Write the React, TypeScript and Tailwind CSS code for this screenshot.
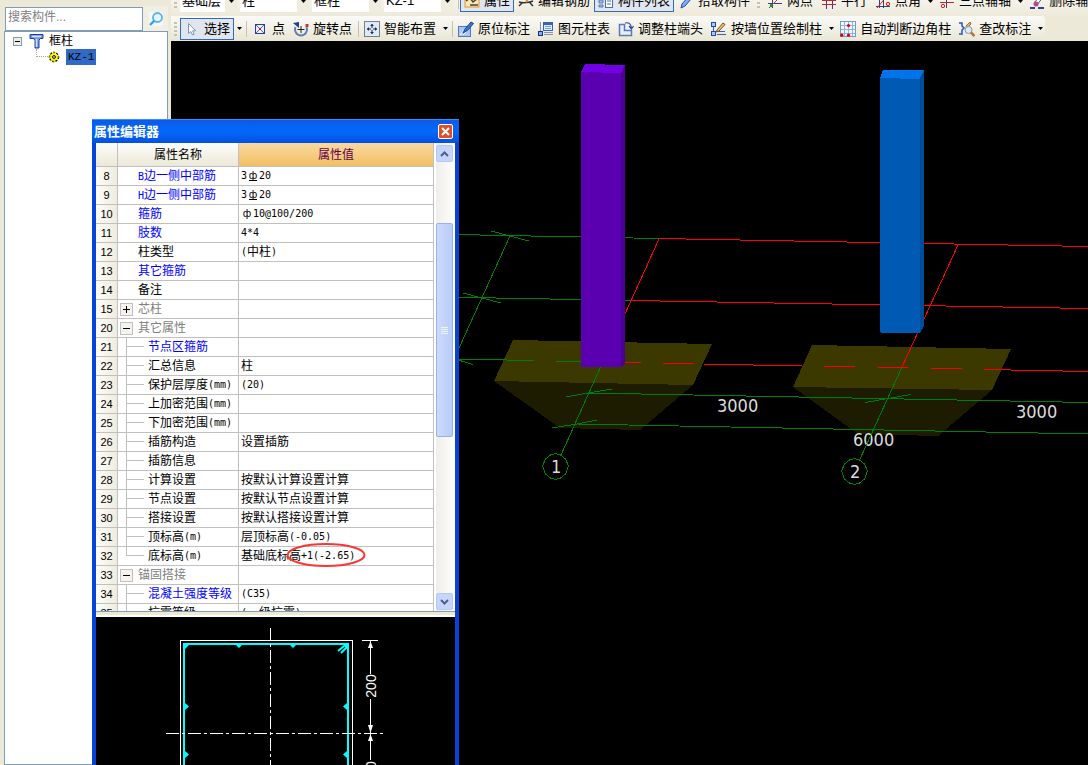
import { useState } from "react";
import type { ReactNode } from "react";

type Kind = "link" | "text" | "group" | "child" | "childLink";

type PropertyRow = {
  no: number;
  name: string;
  value?: string;
  kind: Kind;
  open?: boolean;
  last?: boolean;
  marked?: boolean;
};

const rows: PropertyRow[] = [
  { no: 8, name: "B边一侧中部筋", value: "3Φ20", kind: "link" },
  { no: 9, name: "H边一侧中部筋", value: "3Φ20", kind: "link" },
  { no: 10, name: "箍筋", value: "ф10@100/200", kind: "link" },
  { no: 11, name: "肢数", value: "4*4", kind: "link" },
  { no: 12, name: "柱类型", value: "(中柱)", kind: "text" },
  { no: 13, name: "其它箍筋", kind: "link" },
  { no: 14, name: "备注", kind: "text" },
  { no: 15, name: "芯柱", kind: "group", open: false },
  { no: 20, name: "其它属性", kind: "group", open: true },
  { no: 21, name: "节点区箍筋", kind: "childLink" },
  { no: 22, name: "汇总信息", value: "柱", kind: "child" },
  { no: 23, name: "保护层厚度(mm)", value: "(20)", kind: "child" },
  { no: 24, name: "上加密范围(mm)", kind: "child" },
  { no: 25, name: "下加密范围(mm)", kind: "child" },
  { no: 26, name: "插筋构造", value: "设置插筋", kind: "child" },
  { no: 27, name: "插筋信息", kind: "child" },
  { no: 28, name: "计算设置", value: "按默认计算设置计算", kind: "child" },
  { no: 29, name: "节点设置", value: "按默认节点设置计算", kind: "child" },
  { no: 30, name: "搭接设置", value: "按默认搭接设置计算", kind: "child" },
  { no: 31, name: "顶标高(m)", value: "层顶标高(-0.05)", kind: "child" },
  { no: 32, name: "底标高(m)", value: "基础底标高+1(-2.65)", kind: "child", last: true, marked: true },
  { no: 33, name: "锚固搭接", kind: "group", open: true },
  { no: 34, name: "混凝土强度等级", value: "(C35)", kind: "childLink" },
  { no: 35, name: "抗震等级", value: "(一级抗震)", kind: "child" },
];

// Latin runs are set in a half-width mono face, rebar marks in a full-width slot
function Mixed({ text }: { text: string }) {
  const parts = text.match(/[\x20-\x7e]+|[Φф]|[^\x20-\x7eΦф]+/g) ?? [];
  return (
    <span className="inline-flex items-center whitespace-pre">
      {parts.map((part, i) => {
        if (part === "Φ" || part === "ф") {
          return (
            <span key={i} className="flex w-3 justify-center font-['DejaVu_Sans'] text-[10px]">
              <span className={part === "Φ" ? "border-b border-black leading-[9px]" : "leading-[9px]"}>ф</span>
            </span>
          );
        }
        if (/^[\x20-\x7e]+$/.test(part)) {
          return (
            <span key={i} className="font-['DejaVu_Sans_Mono',monospace] text-[10px]">
              {part}
            </span>
          );
        }
        return <span key={i}>{part}</span>;
      })}
    </span>
  );
}

function Icon({ children }: { children: ReactNode }) {
  return (
    <svg viewBox="0 0 16 16" className="size-4 shrink-0" fill="none" aria-hidden="true">
      {children}
    </svg>
  );
}

const icons = {
  pointer: (
    <Icon>
      <path d="M4.500 2.500v10l2.300-2 1.700 3.500 1.700-.8-1.600-3.400h3z" fill="#fff" stroke="#7b93b8" />
    </Icon>
  ),
  point: (
    <Icon>
      <rect x="3.500" y="3.500" width="9" height="9" fill="#e8f0ff" stroke="#2b3f96" />
      <path d="M4 4l8 8M12 4l-8 8" stroke="#5069c0" />
      <rect x="7" y="7" width="2" height="2" fill="#e01010" />
    </Icon>
  ),
  rotate: (
    <Icon>
      <path d="M2.500 6a6 6 0 1 0 11 0" stroke="#5d7fb5" strokeWidth="2" />
      <path d="M0 2l6-1v6z" fill="#1d3f8f" />
      <path d="M8 5v7M4.500 8.500h7" stroke="#222" />
      <rect x="12.500" y="3" width="3" height="3" fill="#c33" />
    </Icon>
  ),
  smart: (
    <Icon>
      <rect x="0.500" y="0.500" width="15" height="15" fill="#dceafc" stroke="#111" strokeDasharray="1 1" />
      <path d="M8 3v4M8 9v4M3 8h4M9 8h4" stroke="#222" />
      <path d="M6 5l2-2 2 2zM6 11l2 2 2-2zM5 6L3 8l2 2zM11 6l2 2-2 2z" fill="#1d2f66" />
    </Icon>
  ),
  origin: (
    <Icon>
      <rect x="0.500" y="5.500" width="12" height="10" fill="#a9c9f2" stroke="#4b79c4" />
      <path d="M2 14l5-6M5 14l6-6" stroke="#fff" />
      <path d="M5 12l2-4 6-7 2.500 1.500-6 7z" fill="#3c78d8" stroke="#1c3f87" />
    </Icon>
  ),
  tableCol: (
    <Icon>
      <path d="M2.500 1v10M6 13.500h9M6 11.500h9" stroke="#8a93a5" />
      <rect x="5.500" y="1.500" width="9" height="8" fill="#dbe9ff" stroke="#3b62b5" />
      <path d="M5 3h10" stroke="#3b62b5" strokeWidth="2" />
      <path d="M7 5.500h6M7 7.500h6" stroke="#7f9fd8" />
      <rect x="0.500" y="10.500" width="4" height="4" fill="#7fb0f5" stroke="#10309a" />
    </Icon>
  ),
  adjust: (
    <Icon>
      <path d="M1.500 3.500h5v6h7v5h-12z" fill="#e6efff" stroke="#5879bd" strokeWidth="1.500" />
      <path d="M7 2c4-1 6 1 6.500 5M11 5l2.500 3L15.500 5" stroke="#274a9b" strokeWidth="1.200" />
    </Icon>
  ),
  wall: (
    <Icon>
      <path d="M2.500 2v12M6 13.500h9M6 10.500h8" stroke="#345fb8" />
      <rect x="0.500" y="1.500" width="4" height="4" fill="#a7c9ff" stroke="#2049a4" />
      <rect x="0.500" y="10.500" width="4" height="4" fill="#a7c9ff" stroke="#2049a4" />
      <path d="M6 9l6-7 2 1.500-6 6.500-2.500 1z" fill="#f2c45f" stroke="#6d5230" />
    </Icon>
  ),
  grid: (
    <Icon>
      <rect x="0.500" y="0.500" width="15" height="15" fill="#f4f9ff" stroke="#6f9bd8" />
      <path d="M4.500 1v14M8.500 1v14M12.500 1v14M1 4.500h14M1 8.500h14M1 12.500h14" stroke="#8db3e6" />
      <circle cx="8.500" cy="4.500" r="1.600" fill="#d00" />
      <circle cx="1.800" cy="14.200" r="1.600" fill="#d00" />
      <circle cx="8.500" cy="14.200" r="1.600" fill="#d00" />
    </Icon>
  ),
  check: (
    <Icon>
      <path d="M0 2h3v3l2 2-2 2v4H0" stroke="#2454c4" strokeWidth="1.500" />
      <path d="M7 5l4-4 1 2-4 4z" fill="#e8b050" stroke="#9a6d28" />
      <circle cx="9.500" cy="9" r="3.500" fill="#dcebfa" stroke="#8295ad" />
      <path d="M12 11.500l3.500 3.500" stroke="#b3793c" strokeWidth="2.500" />
    </Icon>
  ),
  property: (
    <Icon>
      <rect x="1" y="1" width="14" height="13" fill="#fbe6b0" stroke="#e0962d" />
      <path d="M2 8l4-3 3 4 5-4M6 12h8" stroke="#444" strokeWidth="1.500" />
    </Icon>
  ),
  rebar: (
    <Icon>
      <path d="M1 9c3 1 10 1 14-1M1 13l3-3M12 10l3 3" stroke="#333" strokeWidth="1.500" />
      <path d="M8 9l3-5" stroke="#d5952e" strokeWidth="2" />
    </Icon>
  ),
  list: (
    <Icon>
      <path d="M1 2h4v3H1zM1 7h4v3H1zM1 12h4v2H1z" fill="#9dbcf0" stroke="#5d7fb5" />
      <rect x="7.500" y="1.500" width="7" height="13" fill="#fff" stroke="#4b6fb5" />
      <path d="M9 5h4M9 8h4M9 11h4" stroke="#4b6fb5" />
    </Icon>
  ),
  pick: (
    <Icon>
      <path d="M3 15l1-4 7-8 3 2-7 8z" fill="#7fb0f5" stroke="#2049a4" />
    </Icon>
  ),
  twoPoint: (
    <Icon>
      <path d="M1 10.500h14M5.500 3v12M2 15L14 3" stroke="#33418f" />
      <path d="M4 13L14 3" stroke="#c33" />
      <circle cx="4.500" cy="12.500" r="1.700" fill="#2a8c2a" />
    </Icon>
  ),
  parallel: (
    <Icon>
      <path d="M5.500 2v14M11.500 2v14" stroke="#33418f" />
      <path d="M1 7.500h14M1 11.500h14" stroke="#c22" />
    </Icon>
  ),
  angle: (
    <Icon>
      <path d="M1 13.500h14M4.500 3v12M8.500 3v12" stroke="#33418f" />
      <path d="M2 15L12 3" stroke="#c22" />
      <circle cx="13" cy="11" r="1.700" stroke="#c22" />
    </Icon>
  ),
  threePoint: (
    <Icon>
      <path d="M7.500 2v13" stroke="#33418f" />
      <path d="M1 9.500h14" stroke="#c22" />
      <circle cx="4" cy="13" r="1.700" stroke="#c22" />
    </Icon>
  ),
  erase: (
    <Icon>
      <path d="M1 15h5M9 15h6" stroke="#33418f" strokeWidth="2" />
      <path d="M5 10l7-8 2 2-6 8z" fill="#fff" stroke="#555" />
      <circle cx="7" cy="11" r="2.500" fill="#b0479a" />
    </Icon>
  ),
};

type ToolProps = { icon: ReactNode; label: string; active?: boolean; menu?: boolean };

function Caret() {
  return (
    <svg viewBox="0 0 5 3" className="h-[3px] w-[5px]" aria-hidden="true">
      <path d="M0 0h5L2.500 3z" fill="#000" />
    </svg>
  );
}

function Tool({ icon, label, active, menu }: ToolProps) {
  return (
    <>
      <button
        type="button"
        className={`flex h-[22px] shrink-0 items-center gap-1 whitespace-nowrap px-[3px] border ${
          active ? "border-[#316ac5] bg-[#e1e6ee]" : "border-transparent"
        }`}
      >
        {icon}
        {label}
      </button>
      {menu && (
        <button type="button" aria-label={`${label} 菜单`} className="flex h-[22px] w-[10px] shrink-0 items-center justify-center">
          <Caret />
        </button>
      )}
    </>
  );
}

function Grip() {
  return (
    <span className="mx-[3px] flex w-[3px] shrink-0 flex-col gap-[2px]">
      {[0, 1, 2, 3].map((n) => (
        <span key={n} className="h-[2px] bg-[#c5c2b2]" />
      ))}
    </span>
  );
}

function Separator() {
  return <span className="ml-[2px] mr-px h-4 w-px shrink-0 bg-[#c5c2b2]" />;
}

function Combo({ label, options, width }: { label: string; options: string[]; width: string }) {
  return (
    <div className={`relative mr-[3px] h-[22px] shrink-0 bg-white ${width}`}>
      <select aria-label={label} className="h-full w-full appearance-none pl-[2px] outline-none">
        {options.map((o) => (
          <option key={o}>{o}</option>
        ))}
      </select>
      <span className="pointer-events-none absolute inset-y-0 right-0 flex w-3 items-center justify-center bg-[#efede0]">
        <Caret />
      </span>
    </div>
  );
}

function Toolbars() {
  return (
    <div className="bg-[#ece9d8] text-[13px] leading-4">
      <div className="flex h-4 items-end overflow-hidden">
        <div className="flex h-[30px] shrink-0 items-center bg-linear-to-b from-[#fbfaf7] to-[#edeadb]">
          <Grip />
          <Combo label="楼层" options={["基础层"]} width="w-[57px]" />
          <Combo label="构件类别" options={["柱"]} width="w-[69px]" />
          <Combo label="构件类型" options={["框柱"]} width="w-[69px]" />
          <Combo label="构件名称" options={["KZ-1"]} width="w-[69px]" />
          <Separator />
          <Tool icon={icons.property} label="属性" active />
          <Tool icon={icons.rebar} label="编辑钢筋" />
          <Tool icon={icons.list} label="构件列表" active />
          <Tool icon={icons.pick} label="拾取构件" />
        </div>
        <div className="flex h-[30px] min-w-0 flex-1 items-center overflow-hidden bg-linear-to-b from-[#fbfaf7] to-[#edeadb]">
          <Grip />
          <Tool icon={icons.twoPoint} label="两点" />
          <Tool icon={icons.parallel} label="平行" />
          <Tool icon={icons.angle} label="点角" menu />
          <Tool icon={icons.threePoint} label="三点辅轴" menu />
          <Tool icon={icons.erase} label="删除辅轴" />
        </div>
      </div>
      <div className="flex h-[25px] overflow-hidden">
        <div className="flex shrink-0 items-center rounded-r-sm bg-linear-to-b from-[#fbfaf7] to-[#e9e6d5]">
          <Grip />
          <Tool icon={icons.pointer} label="选择" active menu />
          <Separator />
          <Tool icon={icons.point} label="点" />
          <Tool icon={icons.rotate} label="旋转点" />
          <Separator />
          <Tool icon={icons.smart} label="智能布置" menu />
          <Separator />
          <Tool icon={icons.origin} label="原位标注" />
          <Tool icon={icons.tableCol} label="图元柱表" />
          <Tool icon={icons.adjust} label="调整柱端头" />
          <Tool icon={icons.wall} label="按墙位置绘制柱" menu />
          <Tool icon={icons.grid} label="自动判断边角柱" />
          <Tool icon={icons.check} label="查改标注" menu />
        </div>
      </div>
    </div>
  );
}

function Sidebar() {
  const [query, setQuery] = useState<string>("");

  return (
    <aside className="flex w-[171px] shrink-0 flex-col bg-[#ece9d8] pl-1 pr-[3px] pt-[6px]">
      <div className="flex h-[25px] items-center">
        <input
          aria-label="搜索构件"
          placeholder="搜索构件..."
          value={query}
          onChange={(e) => setQuery(e.target.value)}
          className="ml-px h-6 min-w-0 flex-1 border border-[#7f9db9] bg-white px-[2px] pb-1 text-xs outline-none placeholder:text-[#808080]"
        />
        <button type="button" aria-label="搜索" className="flex h-full w-[25px] items-center justify-center bg-[#f1efe4]">
          <svg viewBox="0 0 14 14" className="size-[14px] bg-[#f4f8fb]" fill="none">
            <circle cx="8.500" cy="5.500" r="4.500" fill="#e9f6ff" stroke="#55b3ee" strokeWidth="1.800" />
            <path d="M5.500 8.500L1 13" stroke="#3d9de0" strokeWidth="2.400" />
          </svg>
        </button>
      </div>
      <div className="flex-1 border border-[#7f9db9] bg-white pt-px text-xs">
        <div className="flex h-4 items-center pl-2">
          <button type="button" aria-label="折叠" className="flex size-[9px] items-center justify-center border border-[#7f9db9] bg-[#f0eee4]">
            <span className="h-px w-[5px] bg-black" />
          </button>
          <svg viewBox="0 0 16 16" className="ml-[7px] size-4" aria-hidden="true">
            <path d="M1 1.500h13v4h-3l-1 2V15H6V7.500L5 5.500H1z" fill="#6f9be4" stroke="#1d3f93" />
            <path d="M3 3.500h9M7.500 6v8" stroke="#d3e3ff" strokeWidth="1.500" />
          </svg>
          <span className="ml-1">框柱</span>
        </div>
        <div className="flex h-4 items-center pl-[31px]">
          <span className="mb-2 h-2 w-3 border-b border-l border-dotted border-[#aca899]" />
          <svg viewBox="0 0 12 12" className="size-3" aria-hidden="true">
            <circle cx="6" cy="6" r="4.500" fill="#ff0" stroke="#000" strokeWidth="1.500" strokeDasharray="2 1.300" />
            <path d="M6 1v10M1 6h10M2.500 2.500l7 7M9.500 2.500l-7 7" stroke="#f4e800" />
            <circle cx="6" cy="6" r="1.400" fill="#fff" stroke="#000" />
          </svg>
          <span className="ml-[6px] h-4 bg-[#316ac5] px-[2px] font-['Liberation_Mono'] text-[11px] leading-4">KZ-1</span>
        </div>
      </div>
    </aside>
  );
}

function Scene() {
  return (
    <svg
      viewBox="171 41 917 724"
      preserveAspectRatio="xMinYMin slice"
      className="h-full w-full bg-black"
      fill="none"
      shapeRendering="crispEdges"
      role="img"
      aria-label="三维视图"
    >
      {/* footings */}
      <path d="M513 340L712 344L693 385L494 381z" fill="#3b3800" />
      <path d="M494 381L693 385L640 430L560 428z" fill="#1e1c00" />
      <path d="M812 345L1011 349L992 390L793 387z" fill="#3b3800" />
      <path d="M793 387L992 390L938 436L858 434z" fill="#1e1c00" />

      <g fontFamily="'DejaVu Sans Condensed', 'DejaVu Sans', sans-serif" fontSize="18" fill="#dcdcdc">
        <text x="717" y="412">3000</text>
        <text x="1016" y="418">3000</text>
        <text x="853" y="446">6000</text>
        <text x="551" y="473">1</text>
        <text x="850" y="478">2</text>
      </g>

      {/* axis grid */}
      <g stroke="#008000">
        <path d="M171 229L659 238.500M171 292L631 300.500M171 354L534 360.500M556 361.500L582 362" />
        <path d="M510 236L455 357M491 231L529 241M463 293L501 303M455 359L473 364.500" />
        <path d="M588 393L1088 402.500M577 424L1088 434" />
        <path d="M566 397L588 393L612 389M552 428L577 424L597 420M865 402.500L911 394.500" />
        <path d="M601 366L561 455M902 367L860 459" />
        <path d="M550.500 455l5-1.500 5 1.500 5 4 3 7-3 8-5 4-5 1.500-5-1.500-5-4-3-8 3-7z" />
        <path d="M849.500 460l5-1.500 5 1.500 5 4 3 7-3 8-5 4-5 1.500-5-1.500-5-4-3-8 3-7z" />
      </g>
      <g stroke="#ff0000">
        <path d="M659 238.500L1088 246.500M631 300.500L1088 308.500M659 239L620 325M958 245L902 367" />
        <path d="M622 362.500h19M663 363.500h31M703 364L802 366M824 366.500h31M878 367.500h30M931 368.500h31M984 369.500L1088 371.500" />
      </g>

      {/* columns */}
      <path d="M581 71L621 73V367H581z" fill="#5a00b0" />
      <path d="M585 64L625 65L621 73L581 72z" fill="#7200e4" />
      <path d="M621 73L625 65V363L621 368z" fill="#4c0096" />
      <path d="M880 77H920V333H881L880 332z" fill="#005ab4" />
      <path d="M883 70H924L920 79L880 78z" fill="#0074e8" />
      <path d="M920 78L924 70V326L920 333z" fill="#004c98" />
    </svg>
  );
}

function SectionPreview() {
  return (
    <svg viewBox="96 617 359 148" preserveAspectRatio="xMinYMin slice" className="h-full w-full bg-black" fill="none" role="img" aria-label="截面图">
      <g shapeRendering="crispEdges">
        <path d="M180.500 765V640.500H352.500V765" stroke="#fff" />
        <path d="M184 765V644H348V765" stroke="#0ff" strokeWidth="2" />
        <path d="M270.500 628V765M166 733.500H383" stroke="#fff" strokeDasharray="13 3 3 3" />
        <path d="M362 640.500H378M370.500 641V674M370.500 699V733M370.500 734V760" stroke="#fff" />
      </g>
      <path
        d="M185 645h4l-4 4zM347 645v4l-4-4zM236 645h6l-3 3zM290 645h6l-3 3zM185 703v7l4-3.500zM185 751v7l4-3.500zM347 703v7l-4-3.500zM347 751v7l-4-3.500z"
        fill="#0ff"
      />
      <path d="M338 651l6-5M341 653l6-6" stroke="#0ff" strokeWidth="2" />
      <path d="M370.500 641l2.500 7h-5zM370.500 733l2.500-8h-5zM370.500 734l2.500 7h-5z" fill="#fff" />
      <g fontFamily="'Liberation Sans', sans-serif" fontSize="14" fill="#fff" textAnchor="middle">
        <text transform="translate(376 686) rotate(-90)">200</text>
        <text transform="translate(376 773) rotate(-90)">200</text>
      </g>
    </svg>
  );
}

const nameColor: Record<Kind, string> = {
  link: "text-[#0000ff]",
  text: "text-black",
  group: "text-[#808080]",
  child: "text-black",
  childLink: "text-[#0000ff]",
};

function NameCell({ row }: { row: PropertyRow }) {
  const isChild = row.kind === "child" || row.kind === "childLink";

  return (
    <div className={`flex h-[18px] items-center ${nameColor[row.kind]}`}>
      {isChild && (
        <span className="ml-2 mr-1 flex w-[18px] flex-col self-stretch">
          <span className="h-[9px] border-b border-l border-[#c0c0c0]" />
          <span className={`-mb-px flex-1 ${row.last ? "" : "border-l border-[#c0c0c0]"}`} />
        </span>
      )}
      {row.kind === "group" && (
        <button
          type="button"
          aria-label={row.open ? "折叠" : "展开"}
          className="ml-[2px] mr-[5px] flex size-[13px] items-center justify-center border border-[#c0c0c0] bg-[#f4f3ee]"
        >
          <svg viewBox="0 0 7 7" className="size-[7px]" shapeRendering="crispEdges">
            <path d={row.open ? "M0 3.500h7" : "M0 3.500h7M3.500 0v7"} stroke="#000" />
          </svg>
        </button>
      )}
      <span className={isChild || row.kind === "group" ? "" : "pl-5"}>
        <Mixed text={row.name} />
      </span>
    </div>
  );
}

function PropertyTable() {
  return (
    <table className="w-full table-fixed border-separate border-spacing-0 text-xs">
      <colgroup>
        <col className="w-[22px]" />
        <col className="w-[121px]" />
        <col />
      </colgroup>
      <thead>
        <tr className="h-6">
          <th aria-label="序号" className="border-b border-r border-[#c0c0c0] bg-linear-to-b from-[#fdfdfb] to-[#ebe8d7] p-0" />
          <th className="border-b border-r border-[#c0c0c0] bg-linear-to-b from-[#fdfdfb] to-[#ebe8d7] p-0 font-normal">属性名称</th>
          <th className="border-b border-r border-[#c0c0c0] bg-linear-to-b from-[#fad9a0] to-[#f2bf62] p-0 font-normal text-[#600050]">属性值</th>
        </tr>
      </thead>
      <tbody>
        {rows.map((row) => (
          <tr key={row.no}>
            <td className="border-b border-r border-[#c0c0c0] bg-linear-to-r from-[#fdfdfb] to-[#efecdd] p-0 text-center font-['Liberation_Sans'] text-[11px]">
              {row.no}
            </td>
            <td className="overflow-hidden border-b border-r border-[#c0c0c0] bg-white p-0">
              <NameCell row={row} />
            </td>
            <td className="border-b border-r border-[#c0c0c0] bg-white p-0">
              <div className="relative flex h-[18px] items-center pl-[2px]">
                <Mixed text={row.value ?? ""} />
                {row.marked && (
                  <svg viewBox="0 0 80 26" className="absolute -top-1 left-[47px] h-[26px] w-20" fill="none" aria-hidden="true">
                    <ellipse cx="40" cy="12" rx="38.500" ry="11" stroke="#fb3434" strokeWidth="2" />
                  </svg>
                )}
              </div>
            </td>
          </tr>
        ))}
      </tbody>
    </table>
  );
}

function ScrollBar() {
  return (
    <div className="flex w-[17px] shrink-0 flex-col bg-linear-to-r from-[#f0eeea] to-[#fdfdfb] pb-px pt-[2px]">
      <button type="button" aria-label="向上" className="flex h-[17px] items-center justify-center rounded-xs border border-[#b4c8f6] bg-[#c6d5fd]">
        <svg viewBox="0 0 9 6" className="h-[6px] w-[9px]" fill="none">
          <path d="M1 5l3.500-3.500L8 5" stroke="#4d6185" strokeWidth="2" />
        </svg>
      </button>
      <div className="flex flex-1 flex-col pt-[61px]">
        <div className="flex h-[214px] flex-col items-center justify-center gap-px rounded-xs border border-[#98b2ec] bg-linear-to-r from-[#cbdafe] to-[#b9cbf9]">
          {[0, 1, 2, 3].map((n) => (
            <span key={n} className="h-px w-[7px] bg-[#eef4fe]" />
          ))}
        </div>
      </div>
      <button type="button" aria-label="向下" className="flex h-[17px] items-center justify-center rounded-xs border border-[#b4c8f6] bg-[#c6d5fd]">
        <svg viewBox="0 0 9 6" className="h-[6px] w-[9px]" fill="none">
          <path d="M1 1l3.500 3.500L8 1" stroke="#4d6185" strokeWidth="2" />
        </svg>
      </button>
    </div>
  );
}

function PropertyEditor() {
  return (
    <section className="absolute bottom-0 left-[92px] top-[119px] flex w-[367px] flex-col border-x-4 border-[#0842d8] bg-[#ece9d8]">
      <header className="-mx-1 flex h-6 items-center justify-between border-t border-[#3a8cf8] bg-linear-to-b from-[#0a5be8] via-[#0468fa] to-[#0450e0] pl-[2px] pr-[6px]">
        <h2 className="text-[13px] font-bold leading-none text-white">属性编辑器</h2>
        <button type="button" aria-label="关闭" className="flex size-[15px] items-center justify-center rounded-xs border border-white bg-[#dd4f28]">
          <svg viewBox="0 0 9 9" className="size-[9px]" fill="none">
            <path d="M1 1l7 7M8 1L1 8" stroke="#fff" strokeWidth="2" />
          </svg>
        </button>
      </header>
      <div className="flex h-[469px] shrink-0 gap-[2px] overflow-hidden border-b border-[#7f9db9] bg-white pr-[2px]">
        <div className="min-w-0 flex-1">
          <PropertyTable />
        </div>
        <ScrollBar />
      </div>
      <div className="min-h-0 flex-1 border-t-[3px] border-[#ece9d8] bg-white pt-[2px]">
        <SectionPreview />
      </div>
    </section>
  );
}

export default function App() {
  return (
    <main className="relative flex h-screen overflow-hidden bg-[#ece9d8] font-['Liberation_Sans','Noto_Sans_CJK_SC',sans-serif] text-black">
      <Sidebar />
      <div className="flex min-w-0 flex-1 flex-col">
        <Toolbars />
        <div className="min-h-0 flex-1">
          <Scene />
        </div>
      </div>
      <PropertyEditor />
    </main>
  );
}
